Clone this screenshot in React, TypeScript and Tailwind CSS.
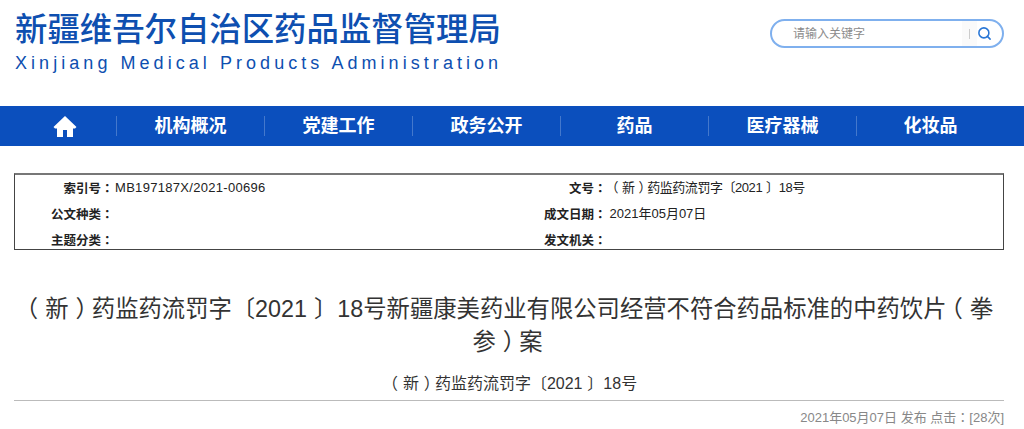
import type { ReactNode } from "react";
import { Search } from "lucide-react";

const cjk = "font-['Liberation_Sans','Noto_Sans_CJK_SC',sans-serif]";
const navItems = ["机构概况", "党建工作", "政务公开", "药品", "医疗器械", "化妆品"];

function Tc({ children }: { children: ReactNode }) {
  return <span className="font-['Noto_Sans_CJK_TC',sans-serif]">{children}</span>;
}

function Open() {
  return <span className="inline-block -translate-x-[0.3em] font-['Noto_Sans_CJK_TC',sans-serif] leading-none">（</span>;
}

function Close() {
  return <span className="inline-block translate-x-[0.3em] font-['Noto_Sans_CJK_TC',sans-serif] leading-none">）</span>;
}

function Row({ a, b, c, d }: { a: string; b: ReactNode; c: string; d: ReactNode }) {
  return (
    <div className="flex h-[26px] items-center text-[13px] leading-[26px] text-[#222]">
      <div className="w-[98.5px] shrink-0 text-right text-[12.5px] font-bold">
        {a}
        <Tc>：</Tc>
      </div>
      <div className="w-[394px] shrink-0 pl-[1.5px] whitespace-nowrap">{b}</div>
      <div className="w-[99px] shrink-0 text-right text-[12.5px] font-bold">
        {c}
        <Tc>：</Tc>
      </div>
      <div className="pl-[3px] whitespace-nowrap">{d}</div>
    </div>
  );
}

export default function App() {
  const docNo = (
    <>
      <Open />新<Close />药监药流罚字〔2021<span className="ml-[0.3em]">〕</span>18号
    </>
  );
  return (
    <div className={`h-[429px] w-[1024px] overflow-hidden bg-white ${cjk}`}>
      <header className="flex h-[106px] items-start justify-between pl-[15px] pr-[20px]">
        <div>
          <div className="mt-[11px] whitespace-nowrap text-[32.4px] font-medium leading-[38px] text-[#0e4fb0]">
            新疆维吾尔自治区药品监督管理局
          </div>
          <div className="mt-[2px] whitespace-nowrap text-[18px] leading-[24px] tracking-[4.05px] text-[#0e4fb0]">
            Xinjiang Medical Products Administration
          </div>
        </div>
        <div className="mt-[19px] flex h-[29px] w-[234px] items-center overflow-hidden rounded-full border-2 border-[#7fb0ee] pl-[16px] pr-[10px]">
          <div className="flex h-full flex-1 items-center bg-white pl-[5px] text-[12px] text-[#8c8c8c]">请输入关键字</div>
          <div className="flex h-full items-center bg-[#fafafa] pl-[7px]">
            <div className="mr-[7px] h-[10px] w-px bg-[#ccc]" />
          </div>
          <Search size={15} strokeWidth={2.5} className="text-[#2a77d6]" />
        </div>
      </header>

      <nav className="flex h-[40px] items-center bg-[#0b4fbd] pl-[14px] text-white">
        <div className="flex h-[20px] w-[102px] shrink-0 items-center justify-center">
          <svg viewBox="0 0 24 24" className="h-[24px] w-[24px]" fill="currentColor">
            <path d="M12 2 L0.5 13 L2 14.5 H4 V23 H10 V16 H14 V23 H20 V14.5 H22 L23.5 13 Z" />
          </svg>
        </div>
        {navItems.map((t) => (
          <div
            key={t}
            className="flex h-[20px] w-[148px] shrink-0 items-center justify-center border-l border-[#4478cc] text-[18px] font-bold"
          >
            {t}
          </div>
        ))}
      </nav>

      <section className="ml-[14px] mt-[27px] h-[77px] w-[990px] border border-[#444] border-t-2 border-t-[#777]">
        <Row
          a="索引号"
          b={<span className="tracking-[0.3px]">MB197187X/2021-00696</span>}
          c="文号"
          d={<span className="tracking-[-0.45px]">{docNo}</span>}
        />
        <Row a="公文种类" b="" c="成文日期" d="2021年05月07日" />
        <Row a="主题分类" b="" c="发文机关" d="" />
      </section>

      <h1 className="ml-[19.5px] mt-[43px] w-[976px] text-center text-[23.33px] font-normal leading-[33px] text-[#333]">
        <Open />新<Close />药监药流罚字〔2021<span className="ml-[0.3em]">〕</span>18号新疆康美药业有限公司经营不符合药品标准的中药饮片<Open />拳参<Close />案
      </h1>

      <div className="mt-[15px] text-center text-[16px] leading-[20px] text-[#333]">{docNo}</div>

      <div className="ml-[14px] mr-[20px] mt-[6px] border-t border-[#bbb] pt-[7px] text-right text-[13px] leading-[18px] text-[#888]">
        2021年05月07日 发布 点击<Tc>：</Tc>[28次]
      </div>
    </div>
  );
}
